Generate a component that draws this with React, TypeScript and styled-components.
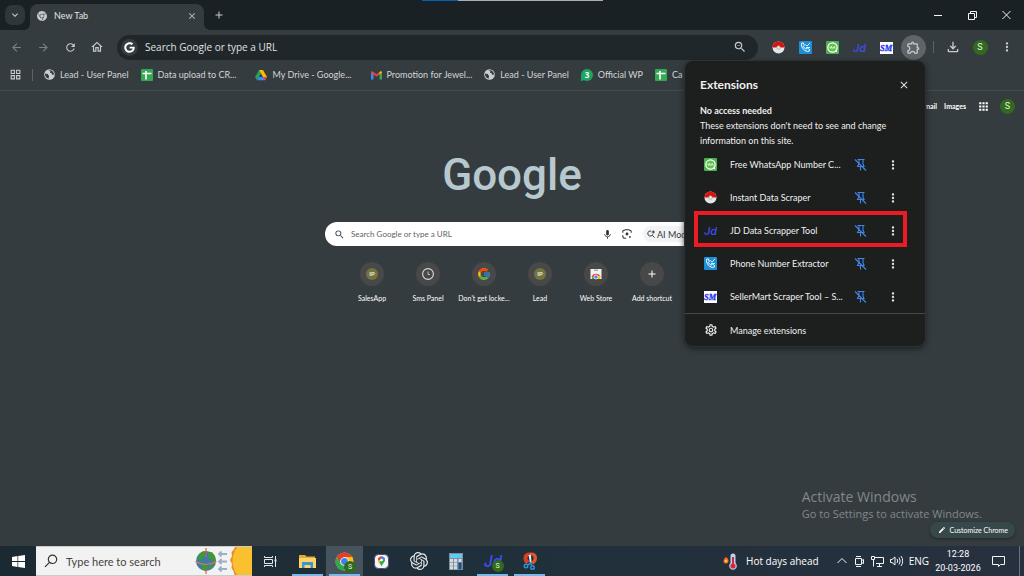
import React from "react";
import styled, { createGlobalStyle, css } from "styled-components";
import {
  MdAdd, MdApps, MdArrowBack, MdArrowForward, MdClose, MdEdit, MdExpandMore, MdMic,
  MdMoreVert, MdOutlineExtension, MdOutlineFileDownload, MdOutlineGridView, MdOutlineHome,
  MdOutlineSettings, MdRefresh, MdSearch, MdZoomOut,
} from "react-icons/md";
import { FcGoogle } from "react-icons/fc";
import { FaGoogle } from "react-icons/fa";
import { SiGooglechrome, SiOpenai } from "react-icons/si";

const ui = `"Open Sans", "Noto Sans", sans-serif`;
const compact = `Lato, "Open Sans", sans-serif`;

const GlobalStyle = createGlobalStyle`
  *, *::before, *::after { box-sizing: border-box; }
  body { margin: 0; background: #353c3f; font-family: ${ui}; color: #e3e5e6; }
  button, input { font: inherit; color: inherit; }
  button { border: 0; padding: 0; background: none; cursor: pointer; }
  a { color: inherit; text-decoration: none; }
  h1, h2, h3, p, ul { margin: 0; padding: 0; }
  svg { display: block; flex: none; }
`;

/* ---------- page frame ---------- */

const Desktop = styled.div`
  position: relative;
  display: flex;
  flex-direction: column;
  min-height: 100vh;
  overflow: hidden;
`;

const TitleBar = styled.header`
  position: relative;
  display: flex;
  align-items: flex-end;
  height: 30px;
  padding-left: 5px;
  background: #1a2124;
`;

const TopEdge = styled.div`
  position: absolute;
  top: 0;
  left: calc(50% - 90px);
  width: 181px;
  height: 1px;
  background: linear-gradient(90deg, #0063b1 36px, #a9adaf 36px);
`;

const IconButton = styled.button<{ $size?: number; $bg?: string; $color?: string }>`
  display: grid;
  place-items: center;
  flex: none;
  width: ${(p) => p.$size ?? 20}px;
  height: ${(p) => p.$size ?? 20}px;
  border-radius: 50%;
  background: ${(p) => p.$bg ?? "transparent"};
  color: ${(p) => p.$color ?? "#c7cbcd"};
`;

const TabSearch = styled(IconButton)`
  align-self: center;
  border-radius: 7px;
  background: #30373a;
`;

const Tab = styled.div`
  position: relative;
  display: flex;
  align-items: center;
  gap: 7px;
  width: 174px;
  height: 26px;
  margin-left: 5px;
  padding: 0 3px 3px 7px;
  border-radius: 8px 8px 0 0;
  background: #353c3f;
  font: 9px ${compact};
  &::before, &::after {
    content: "";
    position: absolute;
    bottom: 0;
    width: 6px;
    height: 6px;
  }
  &::before { left: -6px; background: radial-gradient(circle at 0 0, transparent 6px, #353c3f 6px); }
  &::after { right: -6px; background: radial-gradient(circle at 100% 0, transparent 6px, #353c3f 6px); }
`;

const TabTitle = styled.span`
  flex: 1;
`;

const NewTab = styled(IconButton)`
  align-self: center;
  margin-left: 5px;
`;

const WindowControls = styled.div`
  display: flex;
  align-self: center;
  margin-left: auto;
  padding-right: 1px;
`;

const WindowButton = styled.button`
  display: grid;
  place-items: center;
  width: 34px;
  height: 28px;
`;

const Toolbar = styled.nav`
  display: flex;
  align-items: center;
  height: 34px;
  padding: 0 7px 0 6px;
`;

const NavButtons = styled.div`
  display: flex;
  gap: 7px;
  margin-right: 10px;
`;

const Omnibox = styled.label`
  display: flex;
  align-items: center;
  flex: 1;
  height: 25px;
  padding: 0 8px 0 4px;
  border-radius: 13px;
  background: #20272a;
`;

const SiteBadge = styled.span`
  display: grid;
  place-items: center;
  width: 17px;
  height: 17px;
  border-radius: 50%;
  background: #353c3f;
  color: #fff;
`;

const AddressInput = styled.input`
  flex: 1;
  min-width: 0;
  padding: 0 0 0 7px;
  border: 0;
  outline: 0;
  background: none;
  font-size: 10px;
  &::placeholder { color: #e0e2e3; opacity: 1; }
`;

const Pinned = styled.div`
  display: flex;
  gap: 7px;
  margin-left: 10px;
`;

const Separator = styled.span`
  width: 1px;
  height: 12px;
  background: #5d6467;
`;

const ToolbarEnd = styled.div`
  display: flex;
  align-items: center;
  gap: 7px;
  margin-left: 5px;
  ${Separator} { margin-right: 2px; }
`;

const Avatar = styled.span<{ $size: number }>`
  display: grid;
  place-items: center;
  width: ${(p) => p.$size}px;
  height: ${(p) => p.$size}px;
  border-radius: 50%;
  background: #33691e;
  color: #e8f0e4;
  font: 9px Roboto, sans-serif;
`;

const BookmarkBar = styled.nav`
  display: flex;
  align-items: center;
  height: 27px;
  padding: 0 340px 5px 9px;
  border-bottom: 1px solid #444a4e;
  overflow: hidden;
  white-space: nowrap;
`;

const Bookmark = styled.a<{ $gap?: number }>`
  display: flex;
  align-items: center;
  flex: none;
  gap: 5px;
  margin-left: ${(p) => p.$gap ?? 12}px;
  font: 9px ${compact};
  color: #d2d5d7;
`;

/* ---------- new tab page ---------- */

const NewTabPage = styled.main`
  position: relative;
  display: flex;
  flex-direction: column;
  align-items: center;
  flex: 1;
`;

const PageLinks = styled.div`
  display: flex;
  align-items: center;
  align-self: flex-end;
  gap: 7px;
  height: 30px;
  padding-right: 9px;
  color: #fff;
  font: 700 7px ${compact};
`;

const Logo = styled.h1`
  height: 68px;
  margin-top: 20px;
  color: #b7c9ce;
  font: 500 44px/68px Roboto, sans-serif;
`;

const SearchBox = styled.label`
  display: flex;
  align-items: center;
  width: 374px;
  max-width: 90%;
  height: 24px;
  margin-top: 13px;
  padding: 0 6px 0 9px;
  border-radius: 12px;
  background: #fff;
  color: #3c4043;
`;

const SearchInput = styled.input`
  flex: 1;
  min-width: 0;
  padding: 0 0 0 6px;
  border: 0;
  outline: 0;
  background: none;
  font: 8px ${compact};
  &::placeholder { color: #5f6368; opacity: 1; }
`;

const AiMode = styled.button`
  display: flex;
  align-items: center;
  gap: 2px;
  width: 50px;
  height: 16px;
  margin-left: 6px;
  padding: 0 4px;
  border-radius: 8px;
  background: #f1f3f5;
  color: #33373b;
  font: 9px ${compact};
  white-space: nowrap;
`;

const Shortcuts = styled.ul`
  display: flex;
  margin-top: 16px;
  list-style: none;
`;

const Shortcut = styled.a`
  display: flex;
  flex-direction: column;
  align-items: center;
  gap: 6px;
  width: 56px;
  color: #fff;
  font: 7px/12px ${compact};
  white-space: nowrap;
`;

const ShortcutDisc = styled.span`
  display: grid;
  place-items: center;
  width: 24px;
  height: 24px;
  border-radius: 50%;
  background: #484848;
`;

const Corner = styled.div`
  display: flex;
  flex-direction: column;
  align-self: flex-end;
  margin-top: auto;
  padding: 0 9px 8px 0;
`;

const Watermark = styled.div`
  padding-right: 33px;
  color: #82878a;
  font-size: 11px;
  line-height: 16px;
  strong { display: block; font-size: 14px; font-weight: 400; line-height: 18px; }
`;

const Customize = styled.button`
  display: flex;
  align-items: center;
  align-self: flex-end;
  gap: 4px;
  height: 16px;
  padding: 0 7px 0 8px;
  border-radius: 8px;
  background: #37484b;
  box-shadow: 0 1px 3px #20272a;
  color: #fff;
  font: 7px ${compact};
`;

/* ---------- extensions popup ---------- */

const Popup = styled.section`
  position: absolute;
  top: 61px;
  right: 99px;
  width: 240px;
  border-radius: 8px;
  background: #1d1f1e;
  box-shadow: 0 0 0 1px #2c3234, 0 2px 6px #14181a;
  color: #f0f0f0;
  font: 9px ${compact};
`;

const PopupHeader = styled.div`
  display: flex;
  align-items: center;
  justify-content: space-between;
  height: 42px;
  padding: 5px 11px 0 15px;
  h2 { font: 700 12px ${compact}; }
`;

const AccessNote = styled.div`
  padding: 0 15px;
  line-height: 15px;
  h3 { font-size: 9px; font-weight: 700; }
`;

const ExtensionList = styled.ul`
  list-style: none;
`;

const ExtensionRow = styled.li<{ $marked?: boolean }>`
  position: relative;
  display: flex;
  align-items: center;
  height: 33px;
  padding: 0 22px 0 19px;
  ${(p) => p.$marked && css`
    &::after {
      content: "";
      position: absolute;
      inset: -3px 18px 0 9px;
      border: 4px solid #ed1c24;
      pointer-events: none;
    }
  `}
`;

const ExtensionName = styled.button`
  flex: 1;
  margin-left: 13px;
  padding-bottom: 1px;
  text-align: left;
  white-space: nowrap;
`;

const RowActions = styled.div`
  display: flex;
  gap: 13px;
`;

const ManageRow = styled.a`
  display: flex;
  align-items: center;
  gap: 12px;
  height: 33px;
  padding: 0 19px;
  border-top: 1px solid #454746;
`;

/* ---------- taskbar ---------- */

const Taskbar = styled.footer`
  display: flex;
  align-items: center;
  height: 30px;
  background: linear-gradient(90deg, #1b2932, #20303a 50%, #27303f);
  color: #fff;
`;

const StartButton = styled.button`
  display: grid;
  place-items: center;
  width: 36px;
  height: 30px;
`;

const TaskSearch = styled.label`
  display: flex;
  align-items: center;
  width: 216px;
  height: 30px;
  padding-left: 8px;
  border: 1px solid #c9cbcc;
  border-width: 1px 0;
  background: #f2f2f2;
  color: #333;
`;

const TaskSearchInput = styled.input`
  flex: 1;
  min-width: 0;
  padding: 0 0 0 8px;
  border: 0;
  outline: 0;
  background: none;
  font: 11px ${compact};
  &::placeholder { color: #444; opacity: 1; }
`;

const TaskApps = styled.div`
  display: flex;
`;

const TaskApp = styled.button<{ $open?: boolean; $active?: boolean }>`
  position: relative;
  display: grid;
  place-items: center;
  width: 37px;
  height: 30px;
  background: ${(p) => (p.$active ? "#46555d" : "transparent")};
  ${(p) => p.$open && css`
    &::after {
      content: "";
      position: absolute;
      inset: auto 3px 0 3px;
      height: 2px;
      background: #76b9ed;
    }
  `}
`;

const Tray = styled.div`
  display: flex;
  align-items: center;
  gap: 6px;
  margin-left: auto;
  padding-right: 4px;
  font-size: 10px;
`;

const Weather = styled.button`
  display: flex;
  align-items: center;
  gap: 8px;
  margin-right: 12px;
  font-size: 10px;
`;

const Clock = styled.time`
  width: 46px;
  margin-right: 5px;
  font: 9px/14px Roboto, sans-serif;
  text-align: center;
  white-space: nowrap;
`;

const ShowDesktop = styled.button`
  width: 1px;
  height: 30px;
  margin-left: 8px;
  background: #6a727c;
`;

/* ---------- drawings ---------- */

const PokeBall = () => (
  <svg width="13" height="13" viewBox="0 0 13 13">
    <circle cx="6.500" cy="6.500" r="6" fill="#e3e6e6" />
    <path d="M.5 6.500a6 6 0 0 1 12 0z" fill="#d8120d" />
    <circle cx="6.500" cy="6.500" r="1.800" fill="#e3e6e6" stroke="#999" strokeWidth=".6" />
  </svg>
);

const PhoneIcon = () => (
  <svg width="13" height="13" viewBox="0 0 13 13">
    <rect width="13" height="13" rx="1" fill="#1b8fd9" />
    <path d="M2.500 2.200l1.700-.4 1.200 2.300-1.100 1.200c.5 1.200 1.500 2.200 2.800 2.900l1.300-1.100 2.200 1.400-.5 1.700C6 11.500 1.600 6.300 2.500 2.200z" fill="none" stroke="#fff" />
    <path d="M6.500 3.500l1.500 1.700 3-3.400M7 6.500h4" fill="none" stroke="#d6eeff" />
  </svg>
);

const WaIcon = () => (
  <svg width="13" height="13" viewBox="0 0 13 13">
    <rect width="13" height="13" rx="1" fill="#4caf50" />
    <circle cx="6.500" cy="6.500" r="4.700" fill="#63c04e" stroke="#fff" strokeWidth="1.200" />
    <path d="M8.500 10.500l3 1-1-2.500z" fill="#fff" />
    <path d="M3.800 5.500l.9 2 .9-2 .9 2M7.200 7.500l1-2 1 2" fill="none" stroke="#fff" strokeWidth=".8" />
  </svg>
);

const JdIcon = ({ size = 13 }: { size?: number }) => (
  <svg width={size} height={size} viewBox="0 0 13 13">
    <text x="0" y="10.500" fontFamily="Inter, sans-serif" fontSize="11" fontStyle="italic" fontWeight="500" fill="#3f4ff0">Jd</text>
  </svg>
);

const SmIcon = () => (
  <svg width="13" height="13" viewBox="0 0 13 13">
    <rect y="1" width="13" height="12" fill="#fff" />
    <text x="6.200" y="10" textAnchor="middle" fontFamily="Liberation Serif, serif" fontSize="8.500" fontStyle="italic" fontWeight="700" fill="#2632ee" stroke="#2632ee" strokeWidth=".3">SM</text>
  </svg>
);

const PinOff = () => (
  <svg width="13" height="13" viewBox="0 0 13 13" fill="none" stroke="#4285e8" strokeWidth="1.100">
    <path d="M3.500 1.500h7M5 1.500v4L3.500 8.500h6.500L9 6V1.500M6.500 8.500v4M1 1.500l11 11" />
  </svg>
);

const Globe = () => (
  <svg width="11" height="11" viewBox="0 0 12 12">
    <circle cx="6" cy="6" r="5.800" fill="#c9cdcf" />
    <path d="M1 5l3 .5 1.500 2L5 10.500C2.500 10 1 8 1 5zM5 1.500l2 1-.5 1.500 2 .5.500 2 2-.5C11 3 8 .500 5 1.500z" fill="#353c3f" />
  </svg>
);

const Sheet = () => (
  <svg width="12" height="12" viewBox="0 0 12 12">
    <rect width="12" height="12" rx="1" fill="#34a853" />
    <path d="M1.500 4.500h9M5 2v8.500" stroke="#fff" strokeWidth="1.600" />
  </svg>
);

const Drive = () => (
  <svg width="12" height="12" viewBox="0 0 12 12">
    <path d="M4 1L0 8l2 3.200L6 4.500z" fill="#1ea362" />
    <path d="M4 1h4l4 7H8z" fill="#ffba00" />
    <path d="M4 8h8l-2 3.200H2z" fill="#4285f4" />
    <path d="M8 8h4l-2 3.200z" fill="#ea4335" />
  </svg>
);

const Gmail = () => (
  <svg width="11" height="10" viewBox="0 0 11 9">
    <path d="M0 1.500l2.500 2V9H0z" fill="#4285f4" />
    <path d="M11 1.500l-2.500 2V9H11z" fill="#34a853" />
    <path d="M0 2Q.5 0 2 1l3.500 2.700L9 1q1.500-1 2 1L5.500 6.200z" fill="#ea4335" />
    <path d="M8.500 1.400Q10.500 0 11 2L8.500 3.900z" fill="#fbbc04" />
  </svg>
);

const ChatThree = () => (
  <svg width="12" height="12" viewBox="0 0 12 12">
    <circle cx="6" cy="6" r="6" fill="#1fa463" />
    <path d="M0 12V6l4 5z" fill="#1fa463" />
    <text x="6" y="8.800" textAnchor="middle" fontFamily="Open Sans, sans-serif" fontSize="8" fontWeight="700" fill="#fff">3</text>
  </svg>
);

const IpBadge = () => (
  <svg width="12" height="12" viewBox="0 0 12 12">
    <circle cx="6" cy="6" r="6" fill="#70753f" />
    <text x="6" y="8" textAnchor="middle" fontFamily="Roboto, sans-serif" fontSize="6" fontWeight="700" fill="#e6e3c4">IP</text>
  </svg>
);

const ClockIcon = () => (
  <svg width="12" height="12" viewBox="0 0 12 12" fill="none" stroke="#dcdcdc">
    <circle cx="6" cy="6" r="5.400" strokeWidth="1.100" />
    <path d="M6 3.500v3h2" strokeWidth=".8" />
  </svg>
);

const WebStore = () => (
  <svg width="12" height="12" viewBox="0 0 12 12">
    <path d="M.5 1h11v10H.5z" fill="#f1f1f1" />
    <path d="M4 2.200h4" stroke="#888" />
    <path d="M2 11a4 4 0 0 1 8 0z" fill="#34a853" />
    <path d="M1.500 9A4.700 4.700 0 0 1 10.500 9z" fill="#ea4335" />
    <path d="M7 8h3.500L10 11H7z" fill="#fbbc04" />
    <circle cx="6" cy="9" r="2" fill="#4285f4" stroke="#fff" strokeWidth=".7" />
  </svg>
);

const Lens = () => (
  <svg width="10" height="10" viewBox="0 0 12 12" fill="none" stroke="#333" strokeWidth="1.300">
    <path d="M1 4.500V3q0-1.500 1.500-1.500H3L4 .800h4l1 .7h.5Q11 1.500 11 3v1.500M1 7.500V9q0 2 2 2h2" />
    <circle cx="6" cy="6" r="1.700" fill="#333" stroke="none" />
    <circle cx="9.500" cy="9.500" r="1.100" fill="#333" stroke="none" />
  </svg>
);

const AiSearch = () => (
  <svg width="8" height="8" viewBox="0 0 10 10" fill="none" stroke="#333" strokeWidth="1.200">
    <path d="M5 1.300A3.200 3.200 0 1 0 7.200 5.500M6.500 6.500l3 3M7.800.500v4M5.800 2.500h4" />
  </svg>
);

const ChromeBall = ({ size = 19 }: { size?: number }) => (
  <svg width={size} height={size} viewBox="0 0 20 20">
    <circle cx="10" cy="10" r="9.500" fill="#fbc116" />
    <path d="M1.800 5.200A9.500 9.500 0 0 1 18.200 5.200H10L5.800 12.400z" fill="#e33b2e" />
    <path d="M1.800 5.200A9.500 9.500 0 0 0 9.600 19.500l4.600-7.100H5.800z" fill="#2da94f" />
    <circle cx="10" cy="10" r="4.600" fill="#fff" />
    <circle cx="10" cy="10" r="3.600" fill="#3b82f0" />
  </svg>
);

const ProfileDot = styled.span`
  position: absolute;
  right: -2px;
  bottom: -2px;
  display: grid;
  place-items: center;
  width: 12px;
  height: 12px;
  border-radius: 50%;
  background: #2f6a1d;
  color: #e8f0e4;
  font: 7px Roboto, sans-serif;
`;

const Badged = styled.span`
  position: relative;
`;

const WindowsLogo = () => (
  <svg width="13" height="13" viewBox="0 0 13 13" fill="#fff">
    <path d="M0 1.900L5.500 1.100v5H0zM6.200 1L13 0v6.100H6.200zM0 6.900h5.500v5L0 11.100zM6.200 6.900H13V13l-6.800-1z" />
  </svg>
);

const TaskSearchGlyph = () => (
  <svg width="14" height="14" viewBox="0 0 14 14" fill="none" stroke="#333" strokeWidth="1.200">
    <circle cx="8.500" cy="5.300" r="4.200" />
    <path d="M5.500 8.300L1 12.800" />
  </svg>
);

const EarthAndSun = () => (
  <svg width="58" height="28" viewBox="0 0 58 28">
    <circle cx="12" cy="14" r="10" fill="#3f79ad" />
    <path d="M5 7q3-3 6-3l1 3-2 1 1 2-3 1-1 3-3-1zM14 6l4-1 3 4 1 5-3 1-2-3-3-1zM7 16l5 1 2 3-3 4-3-2zM16 18l4-1-2 4-3 2z" fill="#3f9a35" />
    <path d="M1.500 14.500q10 6 21 0" fill="none" stroke="#e9744f" strokeWidth="1.200" />
    <path d="M12 1v9M12 22v5" stroke="#e05b3a" strokeWidth="1.200" />
    <path d="M25 7h8M25 14.500h8M25 22h8M27.500 4.500L25 7l2.500 2.500M27.500 12L25 14.500l2.500 2.500M27.500 19.500L25 22l2.500 2.500" fill="none" stroke="#9ab0c8" strokeWidth="1.800" />
    <path d="M58 0H41l-1.500 3-2 2 .5 4-2 4 2 4-.5 4 2 3 1 4H58z" fill="#ee8a24" />
    <path d="M58 0H43q-9 14 0 28h15z" fill="#fbc02f" />
  </svg>
);

const TaskView = () => (
  <svg width="13" height="13" viewBox="0 0 13 13" fill="none" stroke="#e4e8ea">
    <path d="M.5 1v1.500h8V1M.5 12v-1.500h8V12M.5 4.500h8v4h-8zM11.500 1v11" />
    <path d="M10.500 5.500h2" strokeWidth="2" />
  </svg>
);

const Folder = () => (
  <svg width="17" height="15" viewBox="0 0 17 15">
    <path d="M0 1h6l1.500 1.500H16V14H0z" fill="#e8a92f" />
    <path d="M0 4h17v10H0z" fill="#fbd566" />
    <path d="M3 14V8h11v6h-2.500v-3h-6v3z" fill="#3d93d6" />
  </svg>
);

const MapsTile = () => (
  <svg width="15" height="15" viewBox="0 0 15 15">
    <rect x=".5" y=".5" width="14" height="14" rx="4" fill="#f4f3f8" stroke="#5b4a78" />
    <path d="M7.500 12.500C6.500 9.500 4 8.500 4 6a3.500 3.500 0 0 1 7 0c0 2.500-2.500 3.500-3.500 6.500z" fill="#34a853" />
    <path d="M4 6a3.500 3.500 0 0 1 3.500-3.500V6z" fill="#ea4335" />
    <path d="M7.500 2.500A3.500 3.500 0 0 1 11 6H7.500z" fill="#4285f4" />
    <path d="M4 6h3.500L5.500 9Q4 7.500 4 6z" fill="#fbbc04" />
    <circle cx="7.500" cy="6" r="1.300" fill="#fff" />
  </svg>
);

const Calculator = () => (
  <svg width="14" height="17" viewBox="0 0 14 17">
    <rect width="14" height="17" fill="#7f8f9b" />
    <rect x="1" y="1" width="12" height="4" fill="#5ecbf3" />
    <g fill="#d3dce2">
      <rect x="1" y="6" width="3" height="3" /><rect x="5" y="6" width="3" height="3" /><rect x="9.500" y="6" width="3" height="3" />
      <rect x="1" y="9.700" width="3" height="3" /><rect x="5" y="9.700" width="3" height="3" />
      <rect x="1" y="13.300" width="3" height="3" /><rect x="5" y="13.300" width="3" height="3" />
    </g>
    <rect x="9.500" y="9.700" width="3" height="6.600" fill="#1a4f8f" />
  </svg>
);

const Snip = () => (
  <svg width="16" height="18" viewBox="0 0 16 18">
    <path d="M8 .500Q1.500.500 1.500 6q0 4 3 6L8 9Q5 8 5.500 5.500T8 3z" fill="#d9401f" />
    <path d="M8 .500q7-.5 7 5.500 0 4-4 6.500L9 10q3-2 2.500-4.500T8 3z" fill="#e2552b" />
    <path d="M6.500 3l2.500-.5L9.500 11H8z" fill="#e8eef2" />
    <circle cx="4" cy="14" r="1.800" fill="none" stroke="#2b93dc" strokeWidth="1.400" />
    <circle cx="10.500" cy="15.500" r="1.800" fill="none" stroke="#2b93dc" strokeWidth="1.400" />
    <path d="M5.500 13l4-2M10 13.500L8 10" stroke="#2b93dc" strokeWidth="1.400" />
  </svg>
);

const Thermometer = () => (
  <svg width="15" height="17" viewBox="0 0 15 17">
    <path d="M3 4q3 2 2.500 4.500T2.800 10.500Q0 10 .5 7.500T3 4z" fill="#f36b21" />
    <circle cx="3" cy="8" r="1.300" fill="#ffcf3f" />
    <path d="M7.500 3a2.500 2.500 0 0 1 5 0v7a3.800 3.800 0 1 1-5 0z" fill="#b8d4ee" />
    <path d="M10 4v8" stroke="#d6273c" strokeWidth="2" />
    <circle cx="10" cy="13" r="2.600" fill="#d6273c" />
  </svg>
);

const TrayIcon = ({ d, width = 12 }: { d: string; width?: number }) => (
  <svg width={width} height="12" viewBox={`0 0 ${width} 12`} fill="none" stroke="#f2f4f5">
    <path d={d} />
  </svg>
);

/* ---------- data ---------- */

const extensions = [
  { name: "Free WhatsApp Number C...", icon: <WaIcon /> },
  { name: "Instant Data Scraper", icon: <PokeBall /> },
  { name: "JD Data Scrapper Tool", icon: <JdIcon />, marked: true },
  { name: "Phone Number Extractor", icon: <PhoneIcon /> },
  { name: "SellerMart Scraper Tool – S...", icon: <SmIcon /> },
];

const bookmarks = [
  { name: "Lead - User Panel", icon: <Globe />, gap: 11 },
  { name: "Data upload to CR...", icon: <Sheet />, gap: 12 },
  { name: "My Drive - Google...", icon: <Drive />, gap: 19 },
  { name: "Promotion for Jewel...", icon: <Gmail />, gap: 19 },
  { name: "Lead - User Panel", icon: <Globe />, gap: 12 },
  { name: "Official WP", icon: <ChatThree />, gap: 12 },
  { name: "Ca", icon: <Sheet />, gap: 12 },
];

const shortcuts = [
  { name: "SalesApp", icon: <IpBadge /> },
  { name: "Sms Panel", icon: <ClockIcon /> },
  { name: "Don't get locke...", icon: <FcGoogle size={14} /> },
  { name: "Lead", icon: <IpBadge /> },
  { name: "Web Store", icon: <WebStore /> },
  { name: "Add shortcut", icon: <MdAdd size={12} /> },
];

export default function App() {
  return (
    <>
      <GlobalStyle />
      <Desktop>
        <TitleBar>
          <TopEdge />
          <TabSearch aria-label="Search tabs"><MdExpandMore size={12} /></TabSearch>
          <Tab>
            <SiGooglechrome size={10} color="#c7cbcd" />
            <TabTitle>New Tab</TabTitle>
            <IconButton aria-label="Close tab" $size={18}><MdClose size={10} /></IconButton>
          </Tab>
          <NewTab aria-label="New tab"><MdAdd size={12} /></NewTab>
          <WindowControls>
            <WindowButton aria-label="Minimize"><TrayIcon width={8} d="M0 6.500h8" /></WindowButton>
            <WindowButton aria-label="Restore"><TrayIcon width={9} d="M.5 4.500h6v6h-6zM2.500 4.500v-2h6v6h-2" /></WindowButton>
            <WindowButton aria-label="Close window"><TrayIcon width={9} d="M.5 2l8 8M8.500 2l-8 8" /></WindowButton>
          </WindowControls>
        </TitleBar>

        <Toolbar aria-label="Browser toolbar">
          <NavButtons>
            <IconButton aria-label="Back" $color="#7b8285"><MdArrowBack size={13} /></IconButton>
            <IconButton aria-label="Forward" $color="#7b8285"><MdArrowForward size={13} /></IconButton>
            <IconButton aria-label="Reload"><MdRefresh size={13} /></IconButton>
            <IconButton aria-label="Home"><MdOutlineHome size={14} /></IconButton>
          </NavButtons>
          <Omnibox>
            <SiteBadge><FaGoogle size={11} /></SiteBadge>
            <AddressInput aria-label="Address" placeholder="Search Google or type a URL" />
            <IconButton aria-label="Zoom"><MdZoomOut size={14} /></IconButton>
          </Omnibox>
          <Pinned>
            <IconButton aria-label="Instant Data Scraper"><PokeBall /></IconButton>
            <IconButton aria-label="Phone Number Extractor"><PhoneIcon /></IconButton>
            <IconButton aria-label="Free WhatsApp Number Checker"><WaIcon /></IconButton>
            <IconButton aria-label="JD Data Scrapper Tool"><JdIcon /></IconButton>
            <IconButton aria-label="SellerMart Scraper Tool"><SmIcon /></IconButton>
          </Pinned>
          <ToolbarEnd>
            <IconButton aria-label="Extensions" $size={25} $bg="#5e6467"><MdOutlineExtension size={15} /></IconButton>
            <Separator />
            <IconButton aria-label="Downloads"><MdOutlineFileDownload size={16} /></IconButton>
            <IconButton aria-label="Profile"><Avatar $size={15}>S</Avatar></IconButton>
            <IconButton aria-label="Browser menu"><MdMoreVert size={14} /></IconButton>
          </ToolbarEnd>
        </Toolbar>

        <BookmarkBar aria-label="Bookmarks">
          <MdOutlineGridView size={13} color="#c7cbcd" />
          <Bookmark as="span" $gap={10}><Separator /></Bookmark>
          {bookmarks.map((b, i) => (
            <Bookmark key={i} href="#" $gap={b.gap}>{b.icon}{b.name}</Bookmark>
          ))}
        </BookmarkBar>

        <NewTabPage>
          <PageLinks>
            <a href="#">Gmail</a>
            <a href="#">Images</a>
            <IconButton aria-label="Google apps" $color="#fff"><MdApps size={13} /></IconButton>
            <Avatar $size={15}>S</Avatar>
          </PageLinks>
          <Logo>Google</Logo>
          <SearchBox>
            <MdSearch size={11} />
            <SearchInput aria-label="Search" placeholder="Search Google or type a URL" />
            <IconButton aria-label="Voice search" $color="#333"><MdMic size={11} /></IconButton>
            <IconButton aria-label="Image search"><Lens /></IconButton>
            <AiMode><AiSearch />AI Mode</AiMode>
          </SearchBox>
          <Shortcuts>
            {shortcuts.map((s) => (
              <li key={s.name}>
                <Shortcut href="#"><ShortcutDisc>{s.icon}</ShortcutDisc>{s.name}</Shortcut>
              </li>
            ))}
          </Shortcuts>
          <Corner>
            <Watermark><strong>Activate Windows</strong>Go to Settings to activate Windows.</Watermark>
            <Customize><MdEdit size={8} />Customize Chrome</Customize>
          </Corner>
        </NewTabPage>

        <Taskbar>
          <StartButton aria-label="Start"><WindowsLogo /></StartButton>
          <TaskSearch>
            <TaskSearchGlyph />
            <TaskSearchInput aria-label="Search Windows" placeholder="Type here to search" />
            <EarthAndSun />
          </TaskSearch>
          <TaskApps>
            <TaskApp aria-label="Task view"><TaskView /></TaskApp>
            <TaskApp aria-label="File Explorer" $open><Folder /></TaskApp>
            <TaskApp aria-label="Chrome" $open $active><Badged><ChromeBall /><ProfileDot>S</ProfileDot></Badged></TaskApp>
            <TaskApp aria-label="Maps"><MapsTile /></TaskApp>
            <TaskApp aria-label="ChatGPT"><SiOpenai size={18} color="#e4e8ea" /></TaskApp>
            <TaskApp aria-label="Calculator"><Calculator /></TaskApp>
            <TaskApp aria-label="Jd" $open><Badged><JdIcon size={18} /><ProfileDot>S</ProfileDot></Badged></TaskApp>
            <TaskApp aria-label="Snipping Tool" $open><Snip /></TaskApp>
          </TaskApps>
          <Tray>
            <Weather><Thermometer />Hot days ahead</Weather>
            <TrayIcon width={10} d="M.5 8l4.500-4.500L9.500 8" />
            <TrayIcon width={12} d="M2.500 3.500h6v6h-6zM8.500 5.500l2-1v4l-2-1M3 1.500h5M3 11.500h5" />
            <TrayIcon width={13} d="M4 2.500h8.500v6H5M2.500 4.500v7M.5 1.500h3v3h-3zM6 11.500h5M8.500 8.500v3" />
            <TrayIcon width={13} d="M.5 4.500H2l3-2.500v8L2 7.500H.500zM7 4q1.500 2 0 4M9 2.500q2.500 3.500 0 7M11 1q3.500 5 0 10" />
            <span>ENG</span>
            <Clock>12:28<br />20-03-2026</Clock>
            <TrayIcon width={13} d="M.5 1.500h12v8H8.500l-2 2v-2h-6z" />
            <ShowDesktop aria-label="Show desktop" />
          </Tray>
        </Taskbar>

        <Popup aria-label="Extensions">
          <PopupHeader>
            <h2>Extensions</h2>
            <IconButton aria-label="Close" $color="#e3e3e3"><MdClose size={12} /></IconButton>
          </PopupHeader>
          <AccessNote>
            <h3>No access needed</h3>
            <p>These extensions don't need to see and change information on this site.</p>
          </AccessNote>
          <ExtensionList>
            {extensions.map((e) => (
              <ExtensionRow key={e.name} $marked={e.marked}>
                {e.icon}
                <ExtensionName>{e.name}</ExtensionName>
                <RowActions>
                  <IconButton aria-label="Pin"><PinOff /></IconButton>
                  <IconButton aria-label="More options" $color="#e3e3e3"><MdMoreVert size={14} /></IconButton>
                </RowActions>
              </ExtensionRow>
            ))}
          </ExtensionList>
          <ManageRow href="#"><MdOutlineSettings size={14} />Manage extensions</ManageRow>
        </Popup>
      </Desktop>
    </>
  );
}
